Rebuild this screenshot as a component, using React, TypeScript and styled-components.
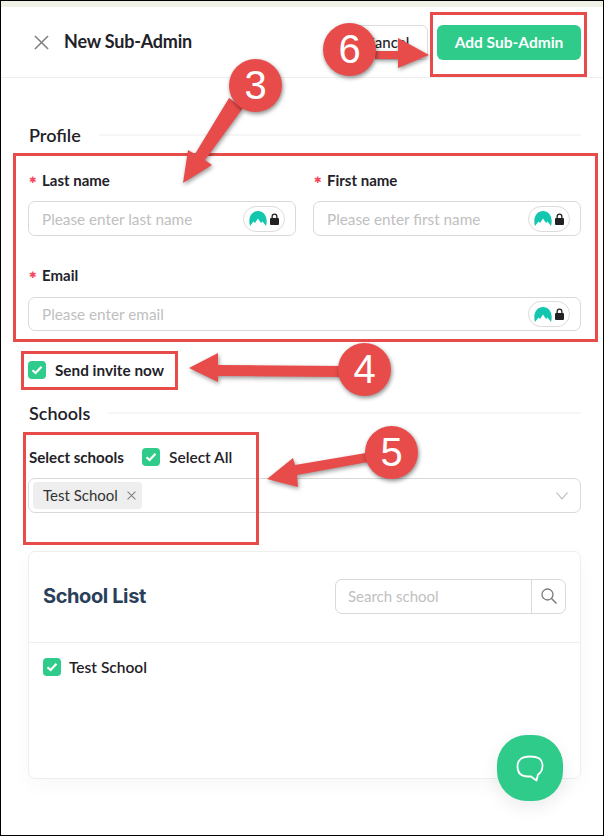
import styled, {createGlobalStyle} from "styled-components";

const GlobalStyle = createGlobalStyle`
  html, body {
    margin: 0;
    padding: 0;
    background: #fff;
  }
  * {
    box-sizing: border-box;
  }
`

const Frame = styled.div`
  position: relative;
  width: 604px;
  height: 836px;
  overflow: hidden;
  background: #fff;
  border: 1px solid #000;
  font-family: Lato, "Liberation Sans", sans-serif;
  color: #1f2229;
`

const TopStrip = styled.div`
  height: 6px;
  background: #eff0e6;
`

const Header = styled.header`
  height: 71px;
  padding: 0 22px 0 33px;
  display: flex;
  align-items: center;
  border-bottom: 1px solid #eeeeee;
`

const CloseButton = styled.button`
  width: 15px;
  height: 15px;
  padding: 0;
  margin-right: 15px;
  border: none;
  background: none;
  color: #7d7d7d;
  display: flex;
`

const Title = styled.h1`
  flex: 1;
  margin: 0 0 2px;
  font-size: 18px;
  font-weight: 700;
  letter-spacing: -0.2px;
`

const CancelButton = styled.button`
  width: 82px;
  height: 35px;
  margin-right: 9px;
  border: 1px solid #dddddd;
  border-radius: 6px;
  background: #fff;
  font: 500 15px Lato, sans-serif;
  color: #1f2229;
`

const AddButton = styled.button`
  width: 144px;
  height: 35px;
  padding: 0;
  border: none;
  border-radius: 6px;
  background: #2ecb8b;
  color: #fff;
  font: 700 15.5px Lato, sans-serif;
`

const Content = styled.main`
  padding: 47px 22px 0 27px;
`

const SectionHeading = styled.div<{$top?: number}>`
  display: flex;
  align-items: center;
  gap: 18px;
  height: 20px;
  margin-top: ${p => p.$top ?? 0}px;
  padding-left: 1px;
  font-size: 18px;
  font-weight: 600;

  &::after {
    content: "";
    flex: 1;
    height: 2px;
    background: #f6f6f6;
  }
`

const FieldGrid = styled.div`
  margin-top: 25px;
  display: grid;
  grid-template-columns: 268px 268px;
  column-gap: 17px;
  row-gap: 29px;
`

const Field = styled.div<{$wide?: boolean}>`
  grid-column: ${p => (p.$wide ? "1 / span 2" : "auto")};
`

const Label = styled.label<{$gap: number}>`
  display: flex;
  align-items: center;
  height: 20px;
  margin-bottom: ${p => p.$gap}px;
  font-size: 15px;
  font-weight: 700;
`

const Required = styled.span`
  width: 14px;
  padding-left: 1px;
  font-family: "DejaVu Sans", sans-serif;
  font-size: 9px;
  font-weight: 400;
  color: #f5475b;
`

const InputBox = styled.div<{$height: number}>`
  display: flex;
  align-items: center;
  height: ${p => p.$height}px;
  padding: 0 10px 0 13px;
  border: 1px solid #d9d9d9;
  border-radius: 7px;
  background: #fff;
`

const TextInput = styled.input`
  flex: 1;
  min-width: 0;
  border: none;
  outline: none;
  padding: 0;
  background: none;
  font: 400 15.300px Lato, sans-serif;

  &::placeholder {
    color: #c0c0c0;
    opacity: 1;
  }
`

const LockBadge = styled.span`
  width: 42px;
  height: 26px;
  padding-left: 5px;
  display: flex;
  align-items: center;
  gap: 3px;
  border: 1px solid #dcdcdc;
  border-radius: 13px;
  background: #fff;
`

const CheckRow = styled.label<{$top: number}>`
  display: flex;
  align-items: center;
  gap: 9px;
  margin-top: ${p => p.$top}px;
  font-size: 15.300px;
  font-weight: 700;
  line-height: 18px;
`

const CheckBox = styled.span`
  width: 18px;
  height: 18px;
  flex: none;
  border-radius: 4px;
  background: #2ecb8b;
  display: flex;
  align-items: center;
  justify-content: center;
`

const SelectHead = styled.div`
  display: flex;
  align-items: center;
  margin-top: 25px;
  height: 18px;
`

const SelectLabel = styled.span`
  width: 114px;
  padding-left: 1px;
  font-size: 15.100px;
  font-weight: 700;
`

const SelectAll = styled(CheckRow)`
  font-size: 15.500px;
  font-weight: 600;
`

const SelectBox = styled.div`
  height: 35px;
  margin-top: 12px;
  padding: 0 12px 0 4px;
  display: flex;
  align-items: center;
  justify-content: space-between;
  border: 1px solid #d9d9d9;
  border-radius: 7px;
`

const Tag = styled.span`
  width: 109px;
  height: 27px;
  padding: 0 6px 1px 10px;
  display: flex;
  align-items: center;
  justify-content: space-between;
  border-radius: 4px;
  background: #eeeeee;
  font-size: 15px;
  color: #333;
`

const TagClose = styled.span`
  display: flex;
  color: #7d7d7d;
`

const Chevron = styled.span`
  display: flex;
  color: #b5b5b5;
`

const Card = styled.section`
  height: 228px;
  margin-top: 38px;
  border: 1px solid #eeeeee;
  border-radius: 7px;
  background: #fff;
  box-shadow: 0 6px 20px rgba(0, 0, 0, 0.03);
`

const CardHead = styled.div`
  height: 91px;
  padding: 0 14px;
  display: flex;
  align-items: center;
  justify-content: space-between;
  border-bottom: 1px solid #eeeeee;
`

const CardTitle = styled.h2`
  margin: 0 0 2px;
  font-family: Inter, sans-serif;
  font-size: 20px;
  font-weight: 700;
  letter-spacing: -0.4px;
  color: #2a3f5a;
`

const SearchBox = styled.div`
  width: 231px;
  height: 35px;
  margin-bottom: 2px;
  display: flex;
  border: 1px solid #d9d9d9;
  border-radius: 7px;
`

const SearchInput = styled(TextInput)`
  padding: 0 0 0 12px;
  font-size: 15px;
`

const SearchButton = styled.span`
  width: 34px;
  flex: none;
  display: flex;
  align-items: center;
  justify-content: center;
  border-left: 1px solid #d9d9d9;
  color: #7a7a7a;
`

const ListBody = styled.div`
  padding: 15px 14px;
`

const ListRow = styled(CheckRow)`
  gap: 8px;
  font-size: 15.500px;
  font-weight: 600;
`

const ChatFab = styled.button`
  position: absolute;
  left: 496px;
  top: 734px;
  width: 66px;
  height: 66px;
  padding: 0;
  border: none;
  border-radius: 30px;
  background: #2ecb8b;
  box-shadow: 0 6px 18px rgba(0, 0, 0, 0.08);
  display: flex;
  align-items: center;
  justify-content: center;
`

const Outline = styled.div<{$x: number; $y: number; $w: number; $h: number}>`
  position: absolute;
  left: ${p => p.$x}px;
  top: ${p => p.$y}px;
  width: ${p => p.$w}px;
  height: ${p => p.$h}px;
  border: 3px solid #e84c4a;
  pointer-events: none;
`

const Callout = styled.div<{$x: number; $y: number}>`
  position: absolute;
  left: ${p => p.$x - 27}px;
  top: ${p => p.$y - 27}px;
  width: 53px;
  height: 53px;
  border-radius: 50%;
  background: #e84c4a;
  box-shadow: 1px 2px 4px rgba(0, 0, 0, 0.45);
  display: flex;
  align-items: center;
  justify-content: center;
  font-family: "Liberation Sans", sans-serif;
  font-size: 40px;
  color: #fff;
`

const ArrowLayer = styled.svg`
  position: absolute;
  left: -1px;
  top: -1px;
  width: 604px;
  height: 836px;
  pointer-events: none;
  filter: drop-shadow(1px 2px 2px rgba(0, 0, 0, 0.4));
`

const Check = () => (
    <svg width="12" height="10" viewBox="0 0 12 10" fill="none">
        <path d="M1.500 5.200 4.600 8 10.500 1.800" stroke="#fff" strokeWidth="2.200"/>
    </svg>
);

const Cross = ({size, weight}: {size: number; weight: number}) => (
    <svg width={size} height={size} viewBox="0 0 16 16" fill="none">
        <path d="M1 1 15 15M15 1 1 15" stroke="currentColor" strokeWidth={weight}/>
    </svg>
);

const Lock = () => (
    <LockBadge>
        <svg width="18" height="15" viewBox="0 0 18 15">
            <path fill="#12c7ae" d="M1 15C-1.500 6 3 0 9 0s10.500 6 8 15L13.500 10.500 12 12 9 7.500 6 12 4.500 10.500z"/>
        </svg>
        <svg width="9" height="12" viewBox="0 0 9 12">
            <path fill="#222" d="M1.500 5V3.500a3 3 0 0 1 6 0V5h.5a1 1 0 0 1 1 1v5a1 1 0 0 1-1 1H1a1 1 0 0 1-1-1V6a1 1 0 0 1 1-1zm1.300 0h3.400V3.500a1.700 1.700 0 0 0-3.400 0z"/>
        </svg>
    </LockBadge>
);

const App = () => {
    return (
        <>
            <GlobalStyle/>
            <Frame>
                <TopStrip/>
                <Header>
                    <CloseButton><Cross size={15} weight={1.6}/></CloseButton>
                    <Title>New Sub-Admin</Title>
                    <CancelButton>Cancel</CancelButton>
                    <AddButton>Add Sub-Admin</AddButton>
                </Header>
                <Content>
                    <SectionHeading>Profile</SectionHeading>
                    <FieldGrid>
                        <Field>
                            <Label $gap={11}><Required>✱</Required>Last name</Label>
                            <InputBox $height={35}>
                                <TextInput placeholder="Please enter last name"/>
                                <Lock/>
                            </InputBox>
                        </Field>
                        <Field>
                            <Label $gap={11}><Required>✱</Required>First name</Label>
                            <InputBox $height={35}>
                                <TextInput placeholder="Please enter first name"/>
                                <Lock/>
                            </InputBox>
                        </Field>
                        <Field $wide>
                            <Label $gap={12}><Required>✱</Required>Email</Label>
                            <InputBox $height={34}>
                                <TextInput placeholder="Please enter email"/>
                                <Lock/>
                            </InputBox>
                        </Field>
                    </FieldGrid>
                    <CheckRow $top={30}><CheckBox><Check/></CheckBox>Send invite now</CheckRow>
                    <SectionHeading $top={24}>Schools</SectionHeading>
                    <SelectHead>
                        <SelectLabel>Select schools</SelectLabel>
                        <SelectAll $top={0}><CheckBox><Check/></CheckBox>Select All</SelectAll>
                    </SelectHead>
                    <SelectBox>
                        <Tag>
                            Test School
                            <TagClose><Cross size={9} weight={1.8}/></TagClose>
                        </Tag>
                        <Chevron>
                            <svg width="12" height="8" viewBox="0 0 12 8" fill="none">
                                <path d="M.5.500 6 7 11.500.500" stroke="currentColor" strokeWidth="1.100"/>
                            </svg>
                        </Chevron>
                    </SelectBox>
                    <Card>
                        <CardHead>
                            <CardTitle>School List</CardTitle>
                            <SearchBox>
                                <SearchInput placeholder="Search school"/>
                                <SearchButton>
                                    <svg width="16" height="16" viewBox="0 0 16 16" fill="none">
                                        <circle cx="6.500" cy="6.500" r="5.500" stroke="currentColor" strokeWidth="1.300"/>
                                        <path d="M10.500 10.500 15.500 15.500" stroke="currentColor" strokeWidth="1.500"/>
                                    </svg>
                                </SearchButton>
                            </SearchBox>
                        </CardHead>
                        <ListBody>
                            <ListRow $top={0}><CheckBox><Check/></CheckBox>Test School</ListRow>
                        </ListBody>
                    </Card>
                </Content>
                <ChatFab>
                    <svg width="28" height="27" viewBox="0 0 28 27" fill="none">
                        <path d="M14 1.500C22 1.500 26.500 3.500 26.500 10.500C26.500 14.500 25.500 17.500 22 19.500L20.500 25.500 15 21.500H12C5 21.500 1.500 18 1.500 11.500C1.500 4.500 6 1.500 14 1.500Z" stroke="#fff" strokeWidth="1.800" strokeLinejoin="round"/>
                    </svg>
                </ChatFab>

                <Outline $x={12} $y={152} $w={585} $h={189}/>
                <Outline $x={20} $y={350} $w={157} $h={39}/>
                <Outline $x={22} $y={431} $w={236} $h={113}/>
                <Outline $x={429} $y={11} $w={157} $h={65}/>

                <ArrowLayer viewBox="0 0 604 836">
                    <path fill="#e84c4a" d="M375 51h23V38l31 17-31 13V59h-23z"/>
                    <path fill="#e84c4a" d="M229 98 243 108 205 160 212 165 183 183 188 150 195 154z"/>
                    <path fill="#e84c4a" d="M189 368 218 353V365L342 366V377L218 376V382z"/>
                    <path fill="#e84c4a" d="M267 479 293 458 295 465 366 453 368 462 297 475 298 487z"/>
                </ArrowLayer>
                <Callout $x={255} $y={85}>3</Callout>
                <Callout $x={364} $y={369}>4</Callout>
                <Callout $x={391} $y={452}>5</Callout>
                <Callout $x={349} $y={49}>6</Callout>
            </Frame>
        </>
    )
}

export default App;
